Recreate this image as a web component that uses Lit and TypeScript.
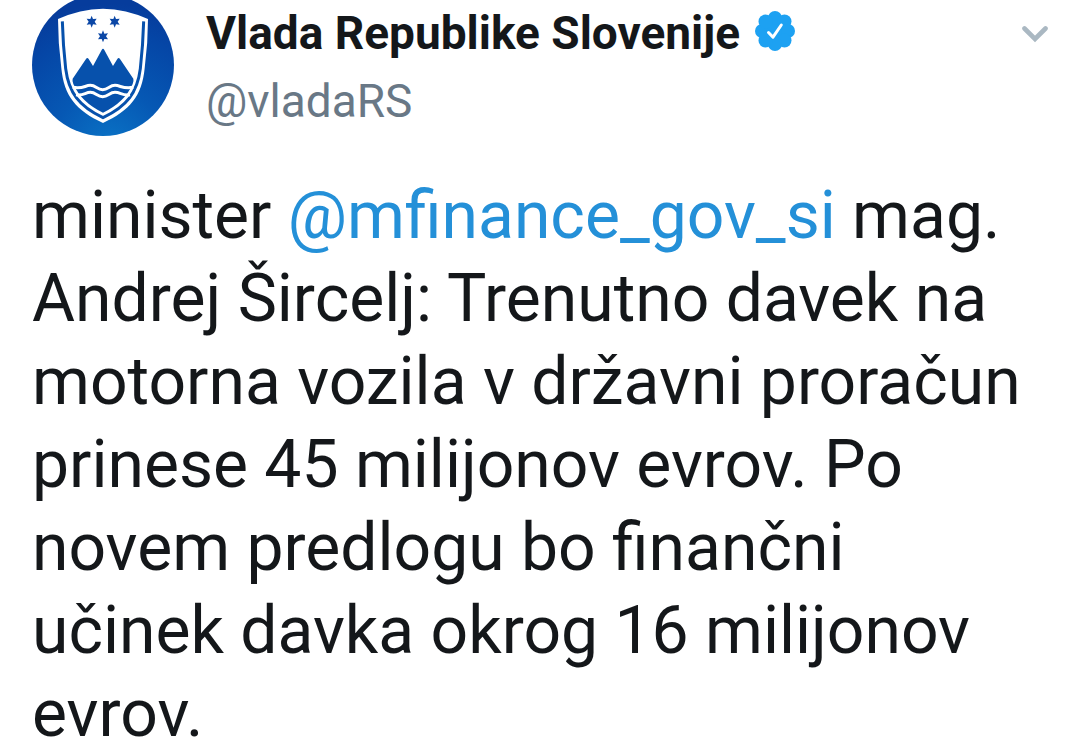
import { LitElement, html, css, svg } from "lit";
import { customElement } from "lit/decorators.js";

const star = (x: number, y: number) => svg`
  <path transform="translate(${x} ${y})" fill="#0b47a6"
    d="M0-18 4-8 15-9 9 0 15 9 4 8 0 18-4 8-15 9-9 0-15-9-4-8Z" />`;

@customElement("profile-avatar")
export class ProfileAvatar extends LitElement {
  static styles = css`
    :host { display: block; }
    .picture { display: block; width: 100%; }
  `;

  render() {
    return html`
      <svg class="picture" viewBox="36 -18 426 426" role="img" aria-label="Vlada Republike Slovenije">
        <defs>
          <radialGradient id="sky" gradientUnits="userSpaceOnUse" cx="270" cy="440" r="430">
            <stop offset="0" stop-color="#0a74c6" />
            <stop offset="0.4" stop-color="#0658b4" />
            <stop offset="0.8" stop-color="#0546a6" />
            <stop offset="1" stop-color="#063c9c" />
          </radialGradient>
        </defs>
        <circle cx="249" cy="195" r="213" fill="url(#sky)" />
        <path fill="#fff" d="M114 57Q180 27 249 26Q318 27 384 57Q384 130 374 205C366 288 330 332 249 369C168 332 132 288 124 205Q114 130 114 57Z" />
        <path fill="none" stroke="#0751ac" stroke-width="9" d="M127 64Q129 135 137 206C146 278 177 319 249 353C321 319 352 278 361 206Q369 135 371 64" />
        <path fill="#0751ac" d="M158 236L198 177Q202 171 206 177L219 198 245 150Q249 143 253 150L279 198 292 177Q296 171 300 177L340 236Q342 244 338 252Q314 307 249 338Q184 307 160 252Q156 244 158 236Z" />
        <g fill="none" stroke="#fff" stroke-width="9">
          <path d="M158 262C190 268 194 256 211 256C228 256 231 269 248 269C265 269 268 256 285 256C302 256 308 268 340 262" />
          <path d="M168 284C190 288 196 277 211 277C228 277 231 290 248 290C265 290 268 277 285 277C302 277 308 288 330 284" />
        </g>
        ${star(215, 65)} ${star(284, 65)} ${star(249, 109)}
      </svg>
    `;
  }
}

@customElement("app-root")
export class AppRoot extends LitElement {
  static styles = css`
    :host {
      display: block;
      overflow: hidden;
      background: #fff;
      color: #14171a;
      font-family: Roboto, "Noto Sans", sans-serif;
    }
    .tweet { margin-top: -6px; padding: 0 31px 0 32px; }
    .header { display: flex; align-items: flex-start; gap: 32px; }
    .avatar { flex: none; width: 142px; }
    .identity {
      flex: 1;
      min-width: 0;
      padding-top: 5px;
      font-size: 46px;
      line-height: 68px;
    }
    .title { display: flex; align-items: center; gap: 15px; }
    .name { margin: 0; font-size: inherit; font-weight: 700; white-space: nowrap; }
    .badge { flex: none; width: 40px; height: 40px; margin-top: -4px; }
    .handle { display: block; color: #697886; text-decoration: none; }
    .more {
      display: flex;
      flex: none;
      margin: 31px 0 0;
      padding: 0;
      border: 0;
      background: none;
      cursor: pointer;
    }
    .chevron { width: 26px; height: 18px; }
    .text { margin: 38px 0 0; font-size: 66px; line-height: 83px; }
    .mention { color: #2490d8; text-decoration: none; }
  `;

  render() {
    return html`
      <article class="tweet">
        <header class="header">
          <profile-avatar class="avatar"></profile-avatar>
          <div class="identity">
            <div class="title">
              <h1 class="name">Vlada Republike Slovenije</h1>
              <svg class="badge" viewBox="0 0 40 40" aria-hidden="true">
                <g fill="#1da1f2">
                  <circle cx="20" cy="20" r="15" />
                  <circle cx="20" cy="7" r="7" />
                  <circle cx="29.5" cy="10.5" r="7" />
                  <circle cx="33" cy="20" r="7" />
                  <circle cx="29.5" cy="29.5" r="7" />
                  <circle cx="20" cy="33" r="7" />
                  <circle cx="10.5" cy="29.5" r="7" />
                  <circle cx="7" cy="20" r="7" />
                  <circle cx="10.5" cy="10.5" r="7" />
                </g>
                <path d="M13.5 21.5 18 26.2 26.3 14" fill="none" stroke="#fff" stroke-width="3" stroke-linecap="round" stroke-linejoin="round" />
              </svg>
            </div>
            <a class="handle" href="#vladaRS">@vladaRS</a>
          </div>
          <button class="more" type="button" aria-label="Več">
            <svg class="chevron" viewBox="0 0 26 18" aria-hidden="true">
              <path d="M2.5 3.5 13 14 23.5 3.5" fill="none" stroke="#aab8c2" stroke-width="4.6" stroke-linecap="round" />
            </svg>
          </button>
        </header>
        <p class="text">
          minister <a class="mention" href="#mfinance_gov_si">@mfinance_gov_si</a> mag.
          Andrej Šircelj: Trenutno davek na motorna vozila v državni proračun
          prinese 45 milijonov evrov. Po novem predlogu bo finančni učinek davka
          okrog 16 milijonov evrov.
        </p>
      </article>
    `;
  }
}
